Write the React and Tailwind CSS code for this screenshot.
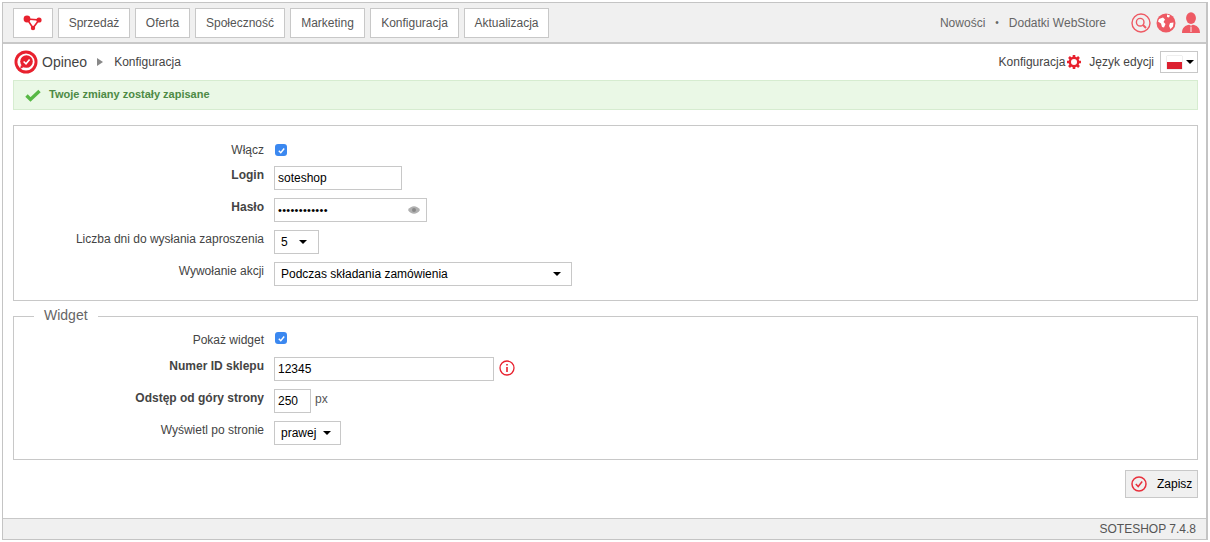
import React from "react";

const font = "[font-family:'Liberation_Sans',Arial,sans-serif]";

function NavBtn({ w, children }) {
  return (
    <div className={`h-[30px] flex items-center justify-center bg-white border border-[#c8c8c8] text-[12px] text-[#555] shrink-0 ${w}`}>
      {children}
    </div>
  );
}

function Caret({ cls = "" }) {
  return <span className={`inline-block w-0 h-0 border-l-[4px] border-r-[4px] border-t-[4px] border-l-transparent border-r-transparent border-t-black ${cls}`} />;
}

function Check() {
  return (
    <span className="w-[12px] h-[12px] rounded-[3px] bg-[#3b88f0] flex items-center justify-center">
      <svg width="9" height="9" viewBox="0 0 10 10" fill="none"><path d="M2 5.2 4.2 7.4 8 2.8" stroke="#fff" strokeWidth="1.6" /></svg>
    </span>
  );
}

function Row({ label, bold, h = "h-[24px]", children }) {
  return (
    <div className={`flex items-start ${h}`}>
      <div className={`w-[250px] text-right text-[12px] leading-[14px] pt-[2px] text-[#444] ${bold ? "font-bold" : ""}`}>{label}</div>
      <div className="ml-[10px] flex items-start">{children}</div>
    </div>
  );
}

function Box({ w, children, cls = "" }) {
  return (
    <div className={`h-[24px] border border-[#c8c8c8] bg-white flex items-center text-[12px] text-black ${w} ${cls}`}>{children}</div>
  );
}

export default function App() {
  return (
    <div className={`w-[1210px] h-[542px] bg-white p-[2px] ${font}`}>
      <div className="w-[1206px] h-[538px] border border-[#c4c4c4] border-r-2 flex flex-col">
        <header className="h-[41px] bg-[#f0f0f0] border-b-2 border-[#c8c8c8] flex items-center pl-[10px] pr-[6px] shrink-0">
          <div className="flex gap-[5px] items-center">
            <NavBtn w="w-[40px]">
              <svg width="20" height="16" viewBox="0 0 20 16">
                <path d="M4 4 L16 5 L10 13 Z" fill="none" stroke="#e8212e" strokeWidth="1.6" />
                <circle cx="4" cy="4" r="3.4" fill="#e8212e" />
                <circle cx="16" cy="5" r="2.6" fill="#e8212e" />
                <circle cx="10" cy="13" r="2.2" fill="#e8212e" />
              </svg>
            </NavBtn>
            <NavBtn w="w-[72px]">Sprzedaż</NavBtn>
            <NavBtn w="w-[55px]">Oferta</NavBtn>
            <NavBtn w="w-[90px]">Społeczność</NavBtn>
            <NavBtn w="w-[75px]">Marketing</NavBtn>
            <NavBtn w="w-[89px]">Konfiguracja</NavBtn>
            <NavBtn w="w-[85px]">Aktualizacja</NavBtn>
          </div>
          <div className="ml-auto flex items-center text-[12px] text-[#666]">
            <span>Nowości</span>
            <span className="mx-[10px] text-[10px]">•</span>
            <span>Dodatki WebStore</span>
            <div className="ml-[25px] flex items-center">
              <svg width="20" height="20" viewBox="0 0 20 20" fill="none" stroke="#ee5a64">
                <circle cx="10" cy="10" r="9" strokeWidth="1.4" />
                <circle cx="9.2" cy="9.2" r="3.8" strokeWidth="1.4" />
                <path d="M12 12 15 15" strokeWidth="2" />
              </svg>
              <svg width="20" height="20" viewBox="0 0 20 20" className="ml-[5px]">
                <circle cx="10" cy="10" r="9.5" fill="#ee5a64" />
                <path d="M3 6 7 4.5 9 6.5 7.5 9 9.5 11 8 14.5 6 14 5 10.5 2 8.5Z M11 1.5 14 2.5 13 4.5 11 4Z M14 10 17.5 9.5 17 13.5 14.5 16 13 13Z" fill="#fff" />
              </svg>
              <svg width="18" height="22" viewBox="0 0 20 24" className="ml-[6px]">
                <ellipse cx="10" cy="6.5" rx="5.5" ry="6.5" fill="#ee5a64" />
                <path d="M0 23C0 17 4 14.5 8 14L10 15 12 14C16 14.5 20 17 20 23Z" fill="#ee5a64" />
                <path d="M10 16V22" stroke="#fff" strokeWidth="1" />
              </svg>
            </div>
          </div>
        </header>

        <main className="flex-1 flex flex-col pl-[10px] pr-[8px] min-h-0">
          <div className="h-[36px] flex items-center shrink-0">
            <svg width="24" height="24" viewBox="0 0 24 24" className="ml-[1px]">
              <circle cx="12" cy="12" r="11.5" fill="#e8212e" />
              <circle cx="12" cy="12" r="8.6" fill="#fff" />
              <circle cx="12.5" cy="11.5" r="6.3" fill="#e8212e" />
              <path d="M7 15 6 19 10 17Z" fill="#e8212e" />
              <path d="M9.6 11.5 12 13.8 15.6 9.6" stroke="#fff" strokeWidth="1.6" fill="none" />
            </svg>
            <span className="ml-[4px] text-[14px] text-[#444]">Opineo</span>
            <span className="ml-[10px] w-0 h-0 border-y-[4px] border-l-[6px] border-y-transparent border-l-[#888]" />
            <span className="ml-[11px] text-[12px] text-[#444]">Konfiguracja</span>
            <div className="ml-auto flex items-center text-[12px] text-[#444]">
              <span>Konfiguracja</span>
              <svg width="14" height="14" viewBox="0 0 14 14" className="ml-[2px]">
                <circle cx="7" cy="7" r="4.2" fill="none" stroke="#e8212e" strokeWidth="2.4" />
                <g stroke="#e8212e" strokeWidth="2.6">
                  <path d="M7 0V3M7 11V14M0 7H3M11 7H14" />
                  <path d="M2 2 4 4M10 10 12 12M2 12 4 10M10 4 12 2" />
                </g>
              </svg>
              <span className="ml-[8px]">Język edycji</span>
              <div className="ml-[6px] w-[38px] h-[22px] border border-[#c8c8c8] bg-white flex items-center pl-[6px]">
                <span className="w-[15px] h-[13px] flex flex-col shadow-[0_0_1px_#999]">
                  <span className="h-1/2 bg-white" />
                  <span className="h-1/2 bg-[#dc2030]" />
                </span>
                <Caret cls="ml-[4px]" />
              </div>
            </div>
          </div>

          <div className="h-[30px] bg-[#eaf8e6] border border-[#d6ecd0] flex items-center pl-[11px] pb-[2px] text-[11px] font-bold text-[#4d8a45] shrink-0">
            <svg width="16" height="13" viewBox="0 0 16 13" className="mr-[8px] mt-[2px]">
              <path d="M1.5 6.5 5.5 10.5 14.5 2" fill="none" stroke="#57b845" strokeWidth="3.4" />
            </svg>
            Twoje zmiany zostały zapisane
          </div>

          <section className="mt-[15px] h-[176px] border border-[#c8c8c8] pt-[15px] shrink-0">
            <Row label="Włącz" h="h-[25px]">
              <div className="pt-[3px] pl-[1px]"><Check /></div>
            </Row>
            <Row label="Login" bold h="h-[32px]">
              <Box w="w-[128px]" cls="pl-[3px]">soteshop</Box>
            </Row>
            <Row label="Hasło" bold h="h-[32px]">
              <Box w="w-[153px]" cls="pl-[3px] justify-between pr-[6px]">
                <span className="tracking-[0.3px] text-[11px]">••••••••••••</span>
                <svg width="12" height="8" viewBox="0 0 12 8"><path d="M0 4C3-1 9-1 12 4 9 9 3 9 0 4Z" fill="#b0b0b0" /><circle cx="6" cy="4" r="2" fill="#888" /></svg>
              </Box>
            </Row>
            <Row label="Liczba dni do wysłania zaproszenia" h="h-[32px]">
              <Box w="w-[45px]" cls="pl-[6px]">5<Caret cls="ml-[11px]" /></Box>
            </Row>
            <Row label="Wywołanie akcji">
              <Box w="w-[298px]" cls="pl-[6px] justify-between pr-[10px]">
                <span>Podczas składania zamówienia</span>
                <Caret />
              </Box>
            </Row>
          </section>

          <section className="relative mt-[15px] h-[144px] border border-[#c8c8c8] pt-[14px] shrink-0">
            <div className="absolute left-[20px] top-[-10px] bg-white px-[10px] text-[14px] leading-[16px] text-[#666]">Widget</div>
            <Row label="Pokaż widget" h="h-[26px]">
              <div className="pt-[1px] pl-[1px]"><Check /></div>
            </Row>
            <Row label="Numer ID sklepu" bold h="h-[32px]">
              <Box w="w-[220px]" cls="pl-[3px]">12345</Box>
              <svg width="16" height="16" viewBox="0 0 16 16" className="ml-[5px] mt-[3px]" fill="none">
                <circle cx="8" cy="8" r="7" stroke="#e8212e" strokeWidth="1.3" />
                <path d="M8 4v1.6M8 7v5" stroke="#e8212e" strokeWidth="1.6" />
              </svg>
            </Row>
            <Row label="Odstęp od góry strony" bold h="h-[32px]">
              <Box w="w-[37px]" cls="pl-[3px]">250</Box>
              <span className="ml-[4px] mt-[1px] text-[12px] text-[#555]">px</span>
            </Row>
            <Row label="Wyświetl po stronie">
              <Box w="w-[67px]" cls="pl-[6px]">prawej<Caret cls="ml-[7px]" /></Box>
            </Row>
          </section>

          <div className="mt-[10px] flex justify-end shrink-0">
            <div className="w-[73px] h-[28px] bg-[#f0f0f0] border border-[#c8c8c8] flex items-center pl-[5px] text-[12px] text-black">
              <svg width="16" height="16" viewBox="0 0 16 16" fill="none">
                <circle cx="8" cy="8" r="7" stroke="#e8303c" strokeWidth="1.5" />
                <path d="M4.8 8 7.2 10.5 11.2 5.5" stroke="#e8303c" strokeWidth="1.5" />
              </svg>
              <span className="ml-[10px]">Zapisz</span>
            </div>
          </div>
        </main>

        <footer className="h-[21px] bg-[#f0f0f0] border-t border-[#c8c8c8] flex items-center justify-end pr-[10px] text-[12px] text-[#555] shrink-0">
          SOTESHOP 7.4.8
        </footer>
      </div>
    </div>
  );
}
